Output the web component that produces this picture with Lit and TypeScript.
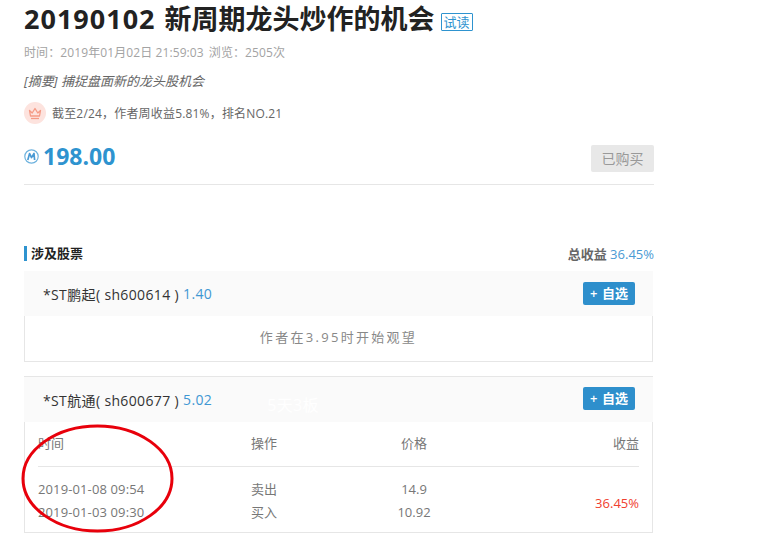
import { LitElement, html, css } from "lit";
import { customElement } from "lit/decorators.js";

@customElement("app-root")
export class AppRoot extends LitElement {
  static styles = css`
    :host { display: block; position: relative; width: 774px; height: 547px; overflow: hidden; background: #fff;
      font-family: "Open Sans", "Noto Sans CJK SC", sans-serif; color: #333; }
    .page { width: 630px; margin-left: 24px; }
    h1 { margin: 0; height: 38px; display: flex; align-items: center; font-size: 27px; line-height: 38px; font-weight: 700; color: #222; white-space: nowrap; }
    .num { letter-spacing: 1px; margin-right: 1px; white-space: pre; }
    .try { margin-left: 6px; margin-top: 6px; width: 32px; height: 18px; box-sizing: border-box; border: 1px solid #2e93cf; border-radius: 1px; color: #2e93cf; font-size: 13px; font-weight: 400; line-height: 16px; text-align: center; letter-spacing: 0; }
    .meta { margin-top: 6px; height: 18px; font-size: 12px; line-height: 18px; color: #a3a3a3; letter-spacing: 0.1px; }
    .meta span { margin-left: 5px; }
    .summary { margin-top: 10px; height: 18px; font-size: 13px; line-height: 18px; font-style: italic; color: #666; }
    .rank { margin-top: 12px; display: flex; align-items: center; gap: 6px; height: 22px; font-size: 12px; color: #666; letter-spacing: 0.18px; }
    .crown { width: 22px; height: 22px; border-radius: 50%; background: #fde3de; display: flex; align-items: center; justify-content: center; }
    .buy { margin-top: 13px; height: 36px; padding-bottom: 11px; border-bottom: 1px solid #e6e6e6; display: flex; justify-content: space-between; align-items: flex-end; }
    .price { align-self: flex-start; margin-top: 4px; display: flex; align-items: center; gap: 4px; color: #2e93cf; font-size: 23px; font-weight: 700; line-height: 30px; }
    .bought { width: 63px; height: 27px; border-radius: 2px; background: #e8e8e8; color: #999; font-size: 14px; line-height: 27px; text-align: center; margin-bottom: 1px; }
    .section { margin-top: 59px; height: 18px; display: flex; justify-content: space-between; align-items: center; font-size: 13px; }
    .section b { display: block; border-left: 3px solid #2e93cf; padding-left: 4px; line-height: 15px; height: 15px; color: #222; font-weight: 700; }
    .total { color: #666; }
    .total strong { font-weight: 700; }
    .total em { font-style: normal; color: #4a9ad4; }
    .stock { margin-top: 9px; width: 629px; }
    .stock + .stock { margin-top: 14px; border-top: 1px solid #e6e6e6; }
    .stock + .stock .add { margin-top: -2px; }
    .head { height: 45px; background: #fafafa; padding: 0 18px 0 19px; display: flex; align-items: center; font-size: 14px; color: #333; letter-spacing: 0.36px; }
    .head .val { color: #3f97d3; margin-left: 4px; }
    .head .ghost { color: #fff; margin-left: 55px; margin-top: 8px; font-size: 16px; }
    .add { margin-left: auto; width: 52px; height: 23px; border-radius: 2px; background: #2e8fcc; color: #fff; font-size: 13px; font-weight: 600; line-height: 23px; text-align: center; letter-spacing: 0; word-spacing: 1px; }
    .note { height: 46px; box-sizing: border-box; border: 1px solid #e6e6e6; border-top: 0; font-size: 13px; letter-spacing: 2.3px; line-height: 43px; text-align: center; color: #888; }
    .body { height: 111px; box-sizing: border-box; border: 1px solid #e6e6e6; border-top: 0; padding: 0 13px; font-size: 13px; color: #777; }
    .thead, .tbody { display: grid; grid-template-columns: 213px 100px 126px 1fr; }
    .thead { height: 41px; padding-bottom: 3px; align-items: center; border-bottom: 1px solid #e6e6e6; }
    .tbody { margin-top: 11px; grid-auto-rows: 23px; line-height: 23px; }
    .date { letter-spacing: 0.12px; }
    .c { text-align: center; }
    .r { text-align: right; }
    .profit { grid-column: 4; grid-row: 1 / span 2; color: #f0402f; align-self: center; padding-top: 5px; text-align: right; }
    .ring { position: absolute; left: 21px; top: 424px; pointer-events: none; }
  `;

  render() {
    return html`
      <div class="page">
        <h1><span class="num">20190102 </span>新周期龙头炒作的机会<span class="try">试读</span></h1>
        <div class="meta">时间：2019年01月02日 21:59:03<span>浏览：2505次</span></div>
        <div class="summary">[摘要] 捕捉盘面新的龙头股机会</div>
        <div class="rank">
          <span class="crown">
            <svg width="14" height="13" viewBox="0 0 14 13" fill="none" stroke="#f59a85" stroke-width="1.3" stroke-linejoin="round">
              <path d="M1.5 3.5 L4.2 6 L7 1.5 L9.8 6 L12.5 3.5 L11.5 9 H2.5 Z" />
              <path d="M3 11.5 H11" />
            </svg>
          </span>
          截至2/24，作者周收益5.81%，排名NO.21
        </div>
        <div class="buy">
          <div class="price">
            <svg width="15" height="15" viewBox="0 0 15 15" fill="none">
              <circle cx="7.5" cy="7.5" r="6.7" stroke="#6db2de" stroke-width="1.2" />
              <path d="M3.8 11 L5.6 4.5 L7.5 8.6 L10 4.5 L10.6 11" stroke="#4a9ad4" stroke-width="1.7" stroke-linejoin="round" />
            </svg>
            198.00
          </div>
          <div class="bought">已购买</div>
        </div>
        <div class="section">
          <b>涉及股票</b>
          <div class="total"><strong>总收益</strong> <em>36.45%</em></div>
        </div>
        <div class="stock">
          <div class="head">*ST鹏起( sh600614 )<span class="val">1.40</span><span class="add">+ 自选</span></div>
          <div class="note">作者在3.95时开始观望</div>
        </div>
        <div class="stock">
          <div class="head">*ST航通( sh600677 )<span class="val">5.02</span><span class="ghost">5天3板</span><span class="add">+ 自选</span></div>
          <div class="body">
            <div class="thead"><span>时间</span><span>操作</span><span class="c">价格</span><span class="r">收益</span></div>
            <div class="tbody">
              <span class="date">2019-01-08 09:54</span><span>卖出</span><span class="c">14.9</span>
              <span class="profit">36.45%</span>
              <span class="date">2019-01-03 09:30</span><span>买入</span><span class="c">10.92</span>
            </div>
          </div>
        </div>
      </div>
      <svg class="ring" width="154" height="110" viewBox="0 0 154 110" fill="none">
        <ellipse cx="76.5" cy="54.5" rx="74.5" ry="52.5" stroke="#e8000b" stroke-width="3" />
      </svg>
    `;
  }
}
